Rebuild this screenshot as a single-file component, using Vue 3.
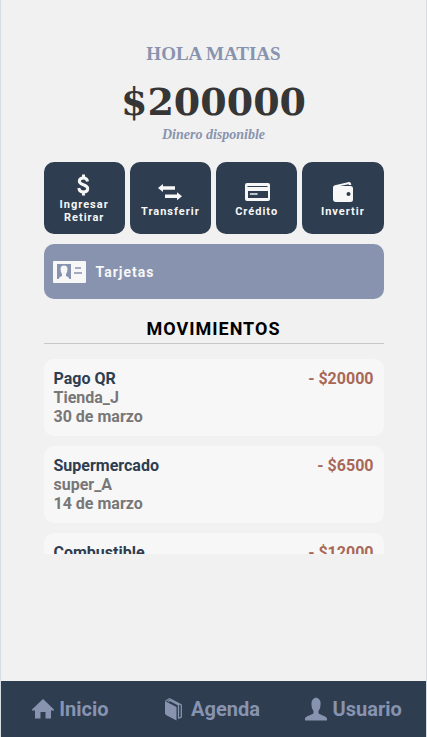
<script setup>
const movements = [
  { title: 'Pago QR', place: 'Tienda_J', date: '30 de marzo', amount: 20000 },
  { title: 'Supermercado', place: 'super_A', date: '14 de marzo', amount: 6500 },
  { title: 'Combustible', place: 'Estacion_B', date: '10 de marzo', amount: 12000 },
]
</script>

<template>
  <div class="app">
    <main class="content">
      <header class="balance">
        <h1 class="greeting">HOLA MATIAS</h1>
        <p class="amount">$200000</p>
        <p class="caption">Dinero disponible</p>
      </header>

      <section class="actions">
        <button type="button" class="tile">
          <svg class="icon" width="26" height="24" viewBox="0 0 26 24" fill="none" stroke="currentColor" stroke-width="3">
            <path d="M16.5 8.500C16.200 6 14.700 5 12.500 5C10 5 8.300 6.200 8.300 8.300C8.300 12.500 16.700 11 16.700 15.500C16.700 17.800 15 19 12.500 19C10 19 8.200 17.800 7.800 15M12.500 1.500V5M12.500 19V22.500" />
          </svg>
          <span>Ingresar<br>Retirar</span>
        </button>
        <button type="button" class="tile">
          <svg class="icon" width="26" height="24" viewBox="0 0 26 24" fill="currentColor">
            <path d="M1 8 6 4V6.300H18V9.700H6V12ZM25 16.300 20 12.300V14.600H8V18H20V20.300Z" />
          </svg>
          <span>Transferir</span>
        </button>
        <button type="button" class="tile">
          <svg class="icon" width="26" height="24" viewBox="0 0 26 24">
            <rect x="1" y="3" width="25" height="18" rx="2" fill="#f7f7f7" />
            <path d="M3.500 6.500H23.500" stroke="#2e3d50" />
            <rect x="4" y="11" width="20" height="7" fill="#2e3d50" />
            <path d="m6 13 1.500 2L9 13l1.500 2L12 13l1.500 2M6 15l1.500-2L9 15l1.500-2L12 15l1.500-2" fill="none" stroke="#f7f7f7" stroke-width=".7" />
          </svg>
          <span>Crédito</span>
        </button>
        <button type="button" class="tile">
          <svg class="icon" width="26" height="24" viewBox="0 0 26 24" fill="currentColor">
            <path d="M6 5 19 2Q20.500 1.700 21 3.500L21.300 5H19L18.500 4.200 10 6H20.500Q23 6 23 8.500V19.500Q23 22 20.500 22H6Q3 22 3 19V7.500Q3 5.500 6 5Z" />
            <circle cx="18.500" cy="14" r="2" fill="#2e3d50" />
          </svg>
          <span>Invertir</span>
        </button>
      </section>

      <button type="button" class="cards">
        <svg width="33" height="24" viewBox="0 0 33 24">
          <rect y="1" width="33" height="22" rx="1" fill="#f7f7f7" />
          <path d="M4 4H18V19H16.500Q15.500 16.500 13 16V14Q14.500 12 14.500 9Q14.500 5.500 11 5.500T7.500 9Q7.500 12 9 14V16Q6.500 16.500 5.500 19H4Z" fill="#8893af" />
          <path d="M22 8H28M21 13H29" stroke="#8893af" stroke-width="1.500" />
        </svg>
        <span>Tarjetas</span>
      </button>

      <h2 class="heading">MOVIMIENTOS</h2>
      <ul class="list">
        <li v-for="m in movements" :key="m.title" class="movement">
          <div>
            <p class="title">{{ m.title }}</p>
            <p>{{ m.place }}</p>
            <p>{{ m.date }}</p>
          </div>
          <p class="spent">- ${{ m.amount }}</p>
        </li>
      </ul>
    </main>

    <nav class="nav">
      <a href="#inicio">
        <svg width="24" height="24" viewBox="0 0 24 24" fill="currentColor">
          <path d="M12 2 23 12.500V13.500H20V21.500H14.500V15H9.500V21.500H4V13.500H1V12.500Z" />
        </svg>
        <span>Inicio</span>
      </a>
      <a href="#agenda">
        <svg width="24" height="24" viewBox="0 0 24 24" fill="currentColor">
          <path d="M2 4 13.500 10V23.500L3 18Q2 17.500 2 16Z" />
          <path d="M2.700 4 6.500 1.700 18.300 8V20L15.500 21.500M5 4.500 7 3.500 15.500 8V21.500" fill="none" stroke="currentColor" stroke-width="1.300" />
        </svg>
        <span>Agenda</span>
      </a>
      <a href="#usuario">
        <svg width="24" height="24" viewBox="0 0 24 24" fill="currentColor">
          <path d="M11 0.500C14.500 1.500 16 3.500 15.500 8C15.500 10.500 14.500 12.500 13.500 14V16C14 18 21.500 18.500 22 21.500V23.500H0V21.500C0.500 18.500 8 18 8.500 16V14C7.500 12.500 6.500 10.500 6.500 8C6 4 7.500 1.500 11 0.500Z" />
        </svg>
        <span>Usuario</span>
      </a>
    </nav>
  </div>
</template>

<style>
body {
  margin: 0;
  background: #f1f1f1;
}
</style>

<style scoped>
.app {
  display: flex;
  flex-direction: column;
  box-sizing: border-box;
  min-height: 100vh;
  border: solid #d5dce2;
  border-width: 0 1px;
  background: #f1f1f1;
  font-family: Roboto, sans-serif;
  font-weight: 700;
}
h1, h2, p, ul {
  margin: 0;
  padding: 0;
}
.content {
  flex: 1;
  width: 80%;
  margin: 0 auto;
  padding-top: 40px;
}
.balance {
  text-align: center;
  font-family: "Liberation Serif", serif;
  color: #8893af;
}
.greeting {
  font-size: 19px;
  line-height: 28px;
}
.amount {
  margin-top: 8px;
  font-family: "DejaVu Serif", serif;
  font-size: 38px;
  line-height: 52px;
  color: #363636;
}
.caption {
  font-size: 14px;
  font-style: italic;
  line-height: 14px;
}
.actions {
  display: grid;
  grid-template-columns: repeat(4, 1fr);
  gap: 5px;
  margin-top: 20px;
}
button {
  border: 0;
  border-radius: 10px;
  font-family: inherit;
  font-weight: 700;
  letter-spacing: 1px;
  color: #f7f7f7;
  cursor: pointer;
}
.tile {
  display: flex;
  flex-direction: column;
  align-items: center;
  justify-content: center;
  height: 72px;
  padding: 1px 0 0;
  background: #2e3d50;
  font-size: 11px;
  line-height: 13px;
}
.icon {
  margin-bottom: 1px;
}
.cards {
  display: flex;
  align-items: center;
  gap: 10px;
  width: 100%;
  height: 55px;
  margin-top: 10px;
  padding: 0 9px;
  background: #8893af;
  font-size: 14px;
}
.heading {
  margin-top: 20px;
  padding-bottom: 4px;
  border-bottom: 1px solid #c8c8c8;
  font-size: 18px;
  line-height: 20px;
  letter-spacing: 1px;
  text-align: center;
  color: #000;
}
.list {
  display: flex;
  flex-direction: column;
  gap: 10px;
  max-height: 195px;
  margin-top: 15px;
  overflow-y: auto;
  scrollbar-width: none;
  list-style: none;
}
.movement {
  display: flex;
  flex-shrink: 0;
  justify-content: space-between;
  padding: 10px;
  border-radius: 10px;
  background: #f7f7f7;
  font-size: 16px;
  line-height: 19px;
  color: #777;
}
.title {
  color: #2e3d50;
}
.spent {
  color: #a76857;
}
.nav {
  display: grid;
  grid-template-columns: repeat(3, 1fr);
  height: 56px;
  background: #2e3d50;
}
.nav a {
  display: flex;
  align-items: center;
  justify-content: center;
  gap: 4px;
  padding-right: 4px;
  font-size: 20px;
  color: #8893af;
  text-decoration: none;
}
</style>
